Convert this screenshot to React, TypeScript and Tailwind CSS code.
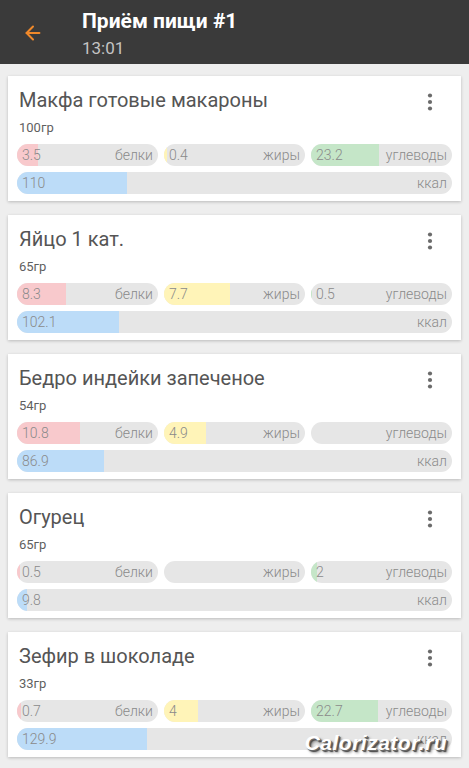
import { ArrowLeft } from "lucide-react";

type Food = {
  name: string;
  weight: string;
  protein: number;
  fat: number;
  carbs: number;
  kcal: number;
};

const foods: Food[] = [
  { name: "Макфа готовые макароны", weight: "100гр", protein: 3.5, fat: 0.4, carbs: 23.2, kcal: 110 },
  { name: "Яйцо 1 кат.", weight: "65гр", protein: 8.3, fat: 7.7, carbs: 0.5, kcal: 102.1 },
  { name: "Бедро индейки запеченое", weight: "54гр", protein: 10.8, fat: 4.9, carbs: 0, kcal: 86.9 },
  { name: "Огурец", weight: "65гр", protein: 0.5, fat: 0, carbs: 2, kcal: 9.8 },
  { name: "Зефир в шоколаде", weight: "33гр", protein: 0.7, fat: 4, carbs: 22.7, kcal: 129.9 },
];

const MAX = { protein: 24, fat: 16.5, carbs: 48, kcal: 436 };

const Bar = ({
  value,
  max,
  label,
  fill,
  className = "",
}: {
  value: number;
  max: number;
  label: string;
  fill: string;
  className?: string;
}) => {
  const pct = Math.min(100, (value / max) * 100);
  return (
    <div className={`relative h-[22px] rounded-full bg-[#e6e6e6] overflow-hidden ${className}`}>
      <div className={`absolute inset-y-0 left-0 ${fill}`} style={{ width: `${pct}%` }} />
      <div className="relative flex h-full items-center justify-between px-[5px] text-[14px] font-light text-[#8a8a8a]">
        <span>{value ? String(value) : ""}</span>
        <span>{label}</span>
      </div>
    </div>
  );
};

const Kebab = () => (
  <svg width="24" height="18" viewBox="0 0 24 18" className="mt-[5px] mr-[10px] shrink-0">
    <circle cx="12" cy="2.5" r="2.1" fill="#6b6b6b" />
    <circle cx="12" cy="9" r="2.1" fill="#6b6b6b" />
    <circle cx="12" cy="15.5" r="2.1" fill="#6b6b6b" />
  </svg>
);

const FoodCard = ({ food }: { food: Food }) => (
  <div className="bg-white px-[9px] pt-3 pb-[7px] shadow-[0_1px_3px_rgba(0,0,0,0.22)]">
    <div className="flex items-start justify-between">
      <div className="pl-[2px]">
        <div className="text-[20px] leading-[24px] text-[#555555]">{food.name}</div>
        <div className="mt-2 text-[13px] leading-[16px] text-[#5f5f5f]">{food.weight}</div>
      </div>
      <Kebab />
    </div>
    <div className="mt-2 grid grid-cols-3 gap-[6px]">
      <Bar value={food.protein} max={MAX.protein} label="белки" fill="bg-[#f8c9cc]" />
      <Bar value={food.fat} max={MAX.fat} label="жиры" fill="bg-[#fff4b8]" />
      <Bar value={food.carbs} max={MAX.carbs} label="углеводы" fill="bg-[#c5e6c8]" />
    </div>
    <Bar value={food.kcal} max={MAX.kcal} label="ккал" fill="bg-[#bcdcf8]" className="mt-[6px]" />
  </div>
);

export default function App() {
  return (
    <div className="relative h-[768px] overflow-hidden bg-[#eeeeee] font-['Roboto','Liberation_Sans',sans-serif]">
      {/* Toolbar */}
      <div className="flex h-16 bg-[#3a3a3a]">
        <div className="flex w-[64px] items-center justify-center pl-[1px] pt-[2px]">
          <ArrowLeft size={22} strokeWidth={2.2} className="text-[#f0892a]" />
        </div>
        <div className="ml-[18px] pt-2">
          <div className="text-[21px] font-bold leading-[26px] text-white">Приём пищи #1</div>
          <div className="mt-[2px] text-[17px] leading-[24px] text-[#c4c4c4]">13:01</div>
        </div>
      </div>

      {/* Food list */}
      <div className="flex flex-col gap-[14px] px-2 pt-3">
        {foods.map((f) => (
          <FoodCard key={f.name} food={f} />
        ))}
      </div>

      {/* Watermark */}
      <div className="absolute bottom-[10px] right-[22px] text-[21px] font-bold italic tracking-[0.5px] text-white font-['Liberation_Sans',sans-serif] [text-shadow:1px_1px_0_#6a6a6a,2px_2px_1px_#4a4a4a,3px_3px_3px_rgba(0,0,0,0.4)]">
        Calorizator.ru
      </div>
    </div>
  );
}
